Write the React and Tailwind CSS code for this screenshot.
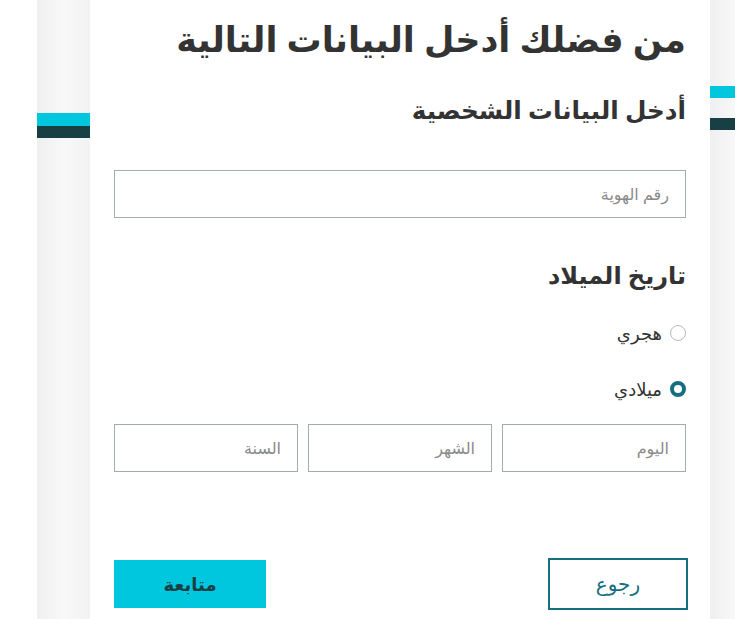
import React from "react";

function Radio({ checked, label }) {
  return (
    <label className="flex items-center gap-[8px] h-[24px]">
      {checked ? (
        <span className="w-[16px] h-[16px] rounded-full border-[4px] border-[#156f80] bg-white box-border" />
      ) : (
        <span className="w-[16px] h-[16px] rounded-full border border-[#b8b8b8] bg-white box-border" />
      )}
      <span className="text-[18px] text-[#333]">{label}</span>
    </label>
  );
}

function Field({ placeholder, className = "" }) {
  return (
    <div className={"h-[48px] border border-[#a3adab] bg-white flex items-center px-[16px] " + className}>
      <span className="text-[16px] text-[#8a8a8a]">{placeholder}</span>
    </div>
  );
}

export default function App() {
  return (
    <div
      className="flex w-[735px] min-h-[619px] bg-white overflow-hidden"
      style={{ fontFamily: '"Noto Sans", "DejaVu Sans", sans-serif' }}
    >
      <div className="w-[37px] shrink-0 bg-white" />
      <div className="w-[53px] shrink-0 flex flex-col bg-gradient-to-r from-[#efefef] via-[#f8f8f8] to-[#f2f2f2]">
        <div className="h-[113px]" />
        <div className="h-[13px] bg-[#00c6de]" />
        <div className="h-[12px] bg-[#173f44]" />
      </div>
      <div dir="rtl" className="w-[620px] shrink-0 bg-white px-[24px] flex flex-col">
        <h1 className="text-[35px] font-bold text-[#333] leading-[40px] mt-[19px]">
          من فضلك أدخل البيانات التالية
        </h1>
        <h2 className="text-[24.7px] font-bold text-[#333] leading-[32px] mt-[35px]">
          أدخل البيانات الشخصية
        </h2>
        <Field placeholder="رقم الهوية" className="mt-[44px]" />
        <h3 className="text-[24px] font-bold text-[#333] leading-[32px] mt-[41px]">
          تاريخ الميلاد
        </h3>
        <div className="flex flex-col gap-[32px] mt-[30px]">
          <Radio label="هجري" />
          <Radio checked label="ميلادي" />
        </div>
        <div className="grid grid-cols-3 gap-[10px] mt-[23px]">
          <Field placeholder="اليوم" />
          <Field placeholder="الشهر" />
          <Field placeholder="السنة" />
        </div>
        <div className="flex justify-between items-center mt-[86px]">
          <button className="w-[140px] h-[52px] border-2 border-[#156f80] text-[#156f80] text-[20px] bg-white -mr-[2px]">
            رجوع
          </button>
          <button className="w-[152px] h-[48px] bg-[#00c6de] text-[#173f44] text-[18px] font-bold">
            متابعة
          </button>
        </div>
      </div>
      <div className="w-[25px] shrink-0 flex flex-col bg-gradient-to-r from-[#efefef] to-[#f8f8f8]">
        <div className="h-[86px]" />
        <div className="h-[12px] bg-[#00c6de]" />
        <div className="h-[20px]" />
        <div className="h-[12px] bg-[#173f44]" />
      </div>
    </div>
  );
}
